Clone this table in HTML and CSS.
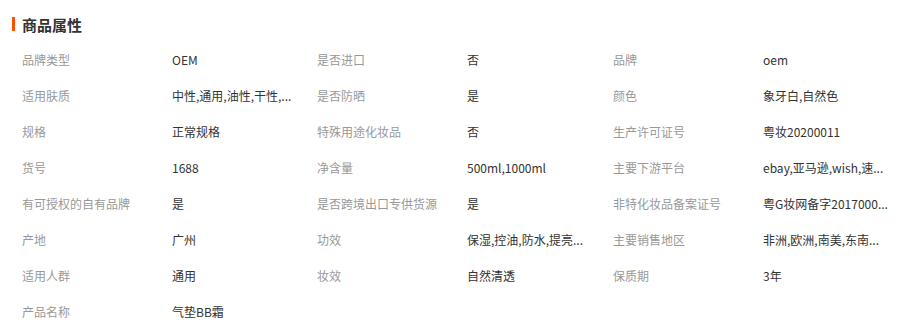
FILE: index.html
```html
<!DOCTYPE html>
<html lang="zh-CN">
<head>
<meta charset="utf-8">
<title>商品属性</title>
<link rel="stylesheet" href="styles.css">
</head>
<body>
<section class="attrs">
  <h2 class="title">商品属性</h2>
  <div class="grid">
    <div class="k">品牌类型</div><div class="v">OEM</div>
    <div class="k">是否进口</div><div class="v">否</div>
    <div class="k">品牌</div><div class="v">oem</div>

    <div class="k">适用肤质</div><div class="v">中性,通用,油性,干性,...</div>
    <div class="k">是否防晒</div><div class="v">是</div>
    <div class="k">颜色</div><div class="v">象牙白,自然色</div>

    <div class="k">规格</div><div class="v">正常规格</div>
    <div class="k">特殊用途化妆品</div><div class="v">否</div>
    <div class="k">生产许可证号</div><div class="v">粤妆20200011</div>

    <div class="k">货号</div><div class="v">1688</div>
    <div class="k">净含量</div><div class="v">500ml,1000ml</div>
    <div class="k">主要下游平台</div><div class="v">ebay,亚马逊,wish,速...</div>

    <div class="k">有可授权的自有品牌</div><div class="v">是</div>
    <div class="k">是否跨境出口专供货源</div><div class="v">是</div>
    <div class="k">非特化妆品备案证号</div><div class="v">粤G妆网备字2017000...</div>

    <div class="k">产地</div><div class="v">广州</div>
    <div class="k">功效</div><div class="v">保湿,控油,防水,提亮...</div>
    <div class="k">主要销售地区</div><div class="v">非洲,欧洲,南美,东南...</div>

    <div class="k">适用人群</div><div class="v">通用</div>
    <div class="k">妆效</div><div class="v">自然清透</div>
    <div class="k">保质期</div><div class="v">3年</div>

    <div class="k">产品名称</div><div class="v">气垫BB霜</div>
  </div>
</section>
</body>
</html>
```
FILE: styles.css
```css
html, body {
  margin: 0;
  padding: 0;
  background: #fff;
}
body {
  font-family: "Noto Sans CJK SC", "Microsoft YaHei", sans-serif;
  font-size: 12px;
  color: #333;
}
.attrs {
  padding: 0 0 0 12px;
}
.title {
  margin: 0;
  height: 42px;
  display: flex;
  align-items: center;
  font-size: 15px;
  font-weight: bold;
  color: #333;
  line-height: 15px;
  padding-top: 6px;
  box-sizing: border-box;
}
.title::before {
  content: "";
  display: block;
  width: 3px;
  height: 14px;
  background: #ff5000;
  margin-right: 7px;
}
.grid {
  display: grid;
  grid-template-columns: 150px 145px 150px 146px 150px 1fr;
  grid-auto-rows: 36px;
  padding-left: 10px;
}
.k, .v {
  line-height: 36px;
  white-space: nowrap;
  overflow: hidden;
}
.k {
  color: #999;
}
.v {
  color: #333;
  max-width: 140px;
}
```
